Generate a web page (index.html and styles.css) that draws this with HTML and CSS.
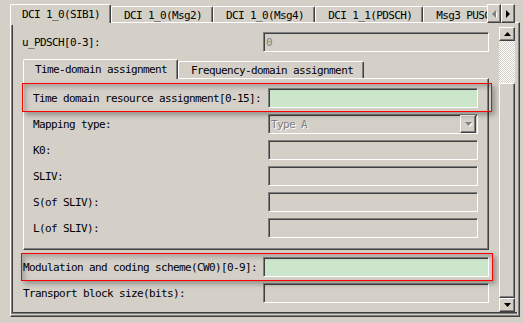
FILE: index.html
```html
<!DOCTYPE html>
<html>
<head>
<meta charset="utf-8">
<link rel="stylesheet" href="styles.css">
</head>
<body>
<div class="app">
  <div class="tabbar">
    <div class="tablist">
      <div class="tab sel">DCI 1_0(SIB1)</div>
      <div class="tab">DCI 1_0(Msg2)</div>
      <div class="tab">DCI 1_0(Msg4)</div>
      <div class="tab">DCI 1_1(PDSCH)</div>
      <div class="tab">Msg3 PUSCH</div>
    </div>
    <div class="tabnav">
      <div class="btn navbtn"><svg width="5" height="8" viewBox="0 0 5 8"><path d="M5 0 L5 8 L1 4 Z" fill="#fff" transform="translate(1,1)"/><path d="M4 0 L4 8 L0 4 Z" fill="#808080"/></svg></div>
      <div class="btn navbtn"><svg width="5" height="8" viewBox="0 0 5 8"><path d="M0 0 L0 8 L4 4 Z" fill="#000"/></svg></div>
    </div>
  </div>
  <div class="tabpanel">
    <div class="scrollpane">
      <div class="content">
        <div class="row top">
          <span class="lbl">u_PDSCH[0-3]:</span>
          <div class="field"><span class="dis">0</span></div>
        </div>
        <div class="inner">
          <div class="itabs">
            <div class="tab sel">Time-domain assignment</div>
            <div class="tab">Frequency-domain assignment</div>
          </div>
          <div class="ipanel">
            <span class="ilbl">Time domain resource assignment[0-15]:</span>
            <div class="field green"></div>
            <span class="ilbl">Mapping type:</span>
            <div class="field combo"><span class="dis emb">Type A</span><div class="btn dropbtn"><svg width="7" height="4" viewBox="0 0 7 4"><path d="M0 0 H7 L3.5 4 Z" fill="#808080"/></svg></div></div>
            <span class="ilbl">K0:</span>
            <div class="field"></div>
            <span class="ilbl">SLIV:</span>
            <div class="field"></div>
            <span class="ilbl">S(of SLIV):</span>
            <div class="field"></div>
            <span class="ilbl">L(of SLIV):</span>
            <div class="field"></div>
          </div>
        </div>
        <div class="row mcs">
          <span class="lbl">Modulation and coding scheme(CW0)[0-9]:</span>
          <div class="field green"></div>
        </div>
        <div class="row tbs">
          <span class="lbl">Transport block size(bits):</span>
          <div class="field"></div>
        </div>
      </div>
      <div class="vscroll">
        <div class="btn sbtn"><svg width="7" height="4" viewBox="0 0 7 4"><path d="M3.5 0 L7 4 H0 Z" fill="#000"/></svg></div>
        <div class="track"></div>
        <div class="btn thumb"></div>
        <div class="btn sbtn"><svg width="7" height="4" viewBox="0 0 7 4"><path d="M0 0 H7 L3.5 4 Z" fill="#000"/></svg></div>
      </div>
    </div>
  </div>
</div>
<div class="mark mark1"></div>
<div class="mark mark2"></div>
</body>
</html>
```
FILE: styles.css
```css
html, body {
  margin: 0;
  padding: 0;
}
body {
  width: 523px;
  height: 323px;
  overflow: hidden;
  background: #d4d0c8;
  font-family: "DejaVu Sans Mono", "Liberation Mono", monospace;
  font-size: 11px;
  letter-spacing: -0.62px;
  color: #000;
  position: relative;
}
.app {
  padding: 4px 0 0 10px;
}
.tabbar {
  display: flex;
  height: 19px;
  width: 505px;
}
.tablist {
  width: 477px;
  height: 19px;
  display: flex;
  align-items: flex-start;
  overflow: hidden;
  position: relative;
  z-index: 2;
}
.tab {
  flex-shrink: 0;
  box-sizing: border-box;
  height: 16px;
  margin-top: 2px;
  padding: 2px 10px 0 12px;
  line-height: 13px;
  white-space: nowrap;
  border-top: 1px solid #fff;
  border-left: 1px solid #fff;
  border-right: 1px solid #404040;
  box-shadow: inset -1px 0 #808080;
  border-top-left-radius: 2px;
  border-top-right-radius: 2px;
  background: #d4d0c8;
}
.tab.sel {
  height: 19px;
  margin-top: 0;
  padding: 3px 10px 0 11px;
}
.tabnav {
  display: flex;
  height: 19px;
}
.btn {
  box-sizing: border-box;
  background: #d4d0c8;
  border: 1px solid;
  border-color: #fff #404040 #404040 #fff;
  box-shadow: inset -1px -1px #808080;
  display: flex;
  align-items: center;
  justify-content: center;
}
.navbtn {
  width: 14px;
  height: 19px;
}
.tabpanel {
  width: 510px;
  height: 295px;
  margin-top: -1px;
  box-sizing: border-box;
  border: 1px solid;
  border-color: #fff #404040 #404040 #fff;
  box-shadow: inset -1px -1px #808080;
  padding: 2px 2px 2px 0;
}
.scrollpane {
  height: 100%;
  box-sizing: border-box;
  display: flex;
  border-left: 1px solid #808080;
  border-bottom: 1px solid #808080;
  box-shadow: inset 1px -1px #404040;
  padding-top: 2px;
}
.content {
  width: 487px;
  overflow: hidden;
}
.row {
  display: grid;
  grid-template-columns: 251px 226px;
  height: 20px;
  align-items: center;
}
.row .lbl {
  padding-left: 10px;
  white-space: nowrap;
}
.row.top {
  margin-top: 5px;
}
.row.mcs {
  margin-top: 7px;
}
.row.mcs .lbl, .row.tbs .lbl {
  padding-left: 11px;
}
.row.tbs {
  margin-top: 6px;
}
.field {
  box-sizing: border-box;
  height: 20px;
  border: 1px solid;
  border-color: #808080 #fff #fff #808080;
  box-shadow: inset 1px 1px #404040;
  background: #d4d0c8;
  display: flex;
  align-items: center;
}
.field.green {
  background: #cce6cc;
}
.dis {
  color: #808080;
  padding-left: 2px;
  line-height: 13px;
}
.dis.emb {
  text-shadow: 1px 1px #fff;
  flex: 1;
}
.dropbtn {
  width: 16px;
  height: 18px;
  margin-right: 1px;
}
.dropbtn svg {
  filter: drop-shadow(1px 1px 0 #fff);
}
.inner {
  margin: 7px 0 0 11px;
  width: 466px;
}
.itabs {
  display: flex;
  align-items: flex-start;
  height: 20px;
  position: relative;
  z-index: 2;
}
.itabs .tab {
  height: 17px;
  padding-top: 2px;
}
.itabs .tab.sel {
  height: 20px;
  padding-top: 3px;
}
.ipanel {
  margin-top: -1px;
  height: 172px;
  box-sizing: border-box;
  border: 1px solid;
  border-color: #fff #404040 #404040 #fff;
  box-shadow: inset -1px -1px #808080;
  padding: 9px 10px 0 9px;
  display: grid;
  grid-template-columns: 235px 210px;
  grid-auto-rows: 20px;
  row-gap: 6px;
  align-items: center;
}
.ilbl {
  white-space: nowrap;
}
.vscroll {
  width: 16px;
  display: flex;
  flex-direction: column;
  margin-bottom: 1px;
}
.sbtn {
  height: 14px;
  flex-shrink: 0;
}
.track {
  height: 42px;
  flex-shrink: 0;
  background-color: #d4d0c8;
  background-image: conic-gradient(#fff 25%, transparent 0 50%, #fff 0 75%, transparent 0);
  background-size: 2px 2px;
}
.thumb {
  flex: 1;
}
.mark {
  position: absolute;
  box-sizing: border-box;
  border: 1px solid #f00;
  box-shadow: 3px 3px 5px rgba(0, 0, 0, 0.3), inset 3px 3px 5px rgba(0, 0, 0, 0.22);
  pointer-events: none;
}
.mark1 {
  left: 22px;
  top: 83px;
  width: 470px;
  height: 29px;
}
.mark2 {
  left: 21px;
  top: 253px;
  width: 472px;
  height: 28px;
}
```
